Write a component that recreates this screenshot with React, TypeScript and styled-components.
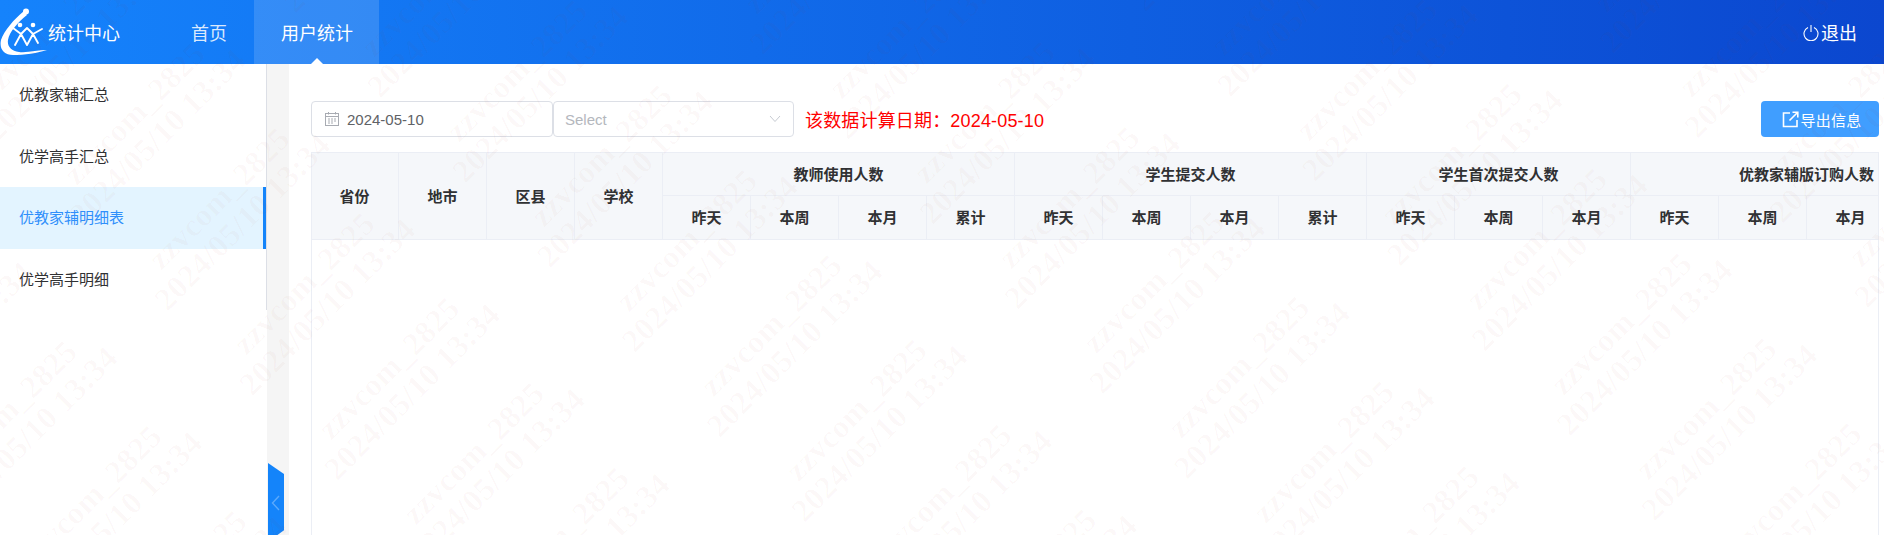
import React from "react";
import styled, { createGlobalStyle } from "styled-components";

const sans = `"Liberation Sans", "Noto Sans CJK SC", sans-serif`;

const Global = createGlobalStyle`
  html, body { margin: 0; padding: 0; height: 100%; background: #fff; overflow: hidden; }
  * { box-sizing: border-box; }
  body { font-family: ${sans}; }
`;

const Page = styled.div`
  position: relative;
  width: 1884px;
  height: 535px;
  overflow: hidden;
  display: flex;
  flex-direction: column;
`;

const Header = styled.header`
  flex: 0 0 64px;
  display: flex;
  align-items: stretch;
  color: #fff;
  background: linear-gradient(90deg, #1583fc 0%, #0b47cf 100%);
`;

const Brand = styled.div`
  flex: 0 0 164px;
  display: flex;
  align-items: center;
  font-size: 18px;
  svg { flex: none; margin-right: 1px; }
`;

const NavItem = styled.div<{ $active?: boolean }>`
  position: relative;
  display: flex;
  align-items: center;
  padding: 0 ${(p) => (p.$active ? 26 : 27)}px 0 27px;
  font-size: 18px;
  background: ${(p) => (p.$active ? "rgba(255,255,255,0.14)" : "transparent")};
  color: ${(p) => (p.$active ? "#fff" : "rgba(255,255,255,0.85)")};
  ${(p) =>
    p.$active
      ? `&::after {
          content: "";
          position: absolute;
          left: 50%;
          bottom: 0;
          margin-left: -6px;
          border: 6px solid transparent;
          border-top: 0;
          border-bottom-color: #fff;
        }`
      : ""}
`;

const Logout = styled.div`
  margin-left: auto;
  padding-right: 27px;
  display: flex;
  align-items: center;
  gap: 2px;
  font-size: 18px;
`;

const Body = styled.div`
  flex: 1;
  display: flex;
  min-height: 0;
`;

const Sidebar = styled.aside`
  flex: 0 0 267px;
`;

const Menu = styled.ul`
  margin: 0;
  padding: 0;
  list-style: none;
  border-right: 1px solid #dcdfe6;
`;

const MenuItem = styled.li<{ $active?: boolean }>`
  height: 61.5px;
  padding: 0 0 2px 19px;
  display: flex;
  align-items: center;
  font-size: 15px;
  color: ${(p) => (p.$active ? "#2f8ffb" : "#303133")};
  background: ${(p) => (p.$active ? "#e3f4ff" : "transparent")};
  border-right: 3px solid ${(p) => (p.$active ? "#1484fa" : "transparent")};
`;

const Gutter = styled.div`
  position: relative;
  flex: 0 0 22px;
  background: #f5f5f5;
`;

const Toggle = styled.div`
  position: absolute;
  left: 1px;
  bottom: -7px;
  width: 16px;
  height: 79px;
  display: flex;
  align-items: center;
  justify-content: center;
  background: #1484fa;
  clip-path: polygon(0 0, 100% 14%, 100% 85%, 0 100%);
`;

const Main = styled.main`
  flex: 1;
  min-width: 0;
  padding: 37px 5px 0 22px;
  display: flex;
  flex-direction: column;
`;

const Toolbar = styled.div`
  flex: 0 0 36px;
  display: flex;
  align-items: center;
`;

const DateField = styled.div`
  width: 242px;
  height: 36px;
  display: flex;
  align-items: center;
  gap: 8px;
  padding-left: 13px;
  border: 1px solid #dcdfe6;
  border-radius: 4px;
  font-size: 15px;
  color: #606266;
`;

const SelectField = styled.div`
  width: 241px;
  height: 36px;
  display: flex;
  align-items: center;
  justify-content: space-between;
  padding: 0 12px 0 11px;
  border: 1px solid #dcdfe6;
  border-radius: 4px;
  font-size: 15px;
  color: #b4b7bd;
`;

const Notice = styled.div`
  margin-left: 11px;
  font-size: 18px;
  letter-spacing: 0.17px;
  color: #f00;
`;

const ExportButton = styled.button`
  margin-left: auto;
  width: 118px;
  height: 36px;
  display: flex;
  align-items: center;
  justify-content: center;
  gap: 2px;
  padding: 0 0 0 3px;
  border: 0;
  border-radius: 4px;
  background: #409eff;
  color: #fff;
  font-family: ${sans};
  font-size: 15px;
  letter-spacing: 0.2px;
`;

const TableWrap = styled.div`
  flex: 1;
  min-height: 0;
  margin-top: 15px;
  overflow: hidden;
  border-left: 1px solid #ebeef5;
  border-right: 1px solid #ebeef5;
`;

const Table = styled.table`
  width: 1672px;
  margin-left: -1px;
  table-layout: fixed;
  border-collapse: separate;
  border-spacing: 0;
`;

const Cell = styled.th`
  height: 44px;
  padding: 0 0 2px;
  text-align: center;
  vertical-align: middle;
  font-size: 15px;
  font-weight: 700;
  color: #303133;
  background: #f5f7fa;
  border-top: 1px solid #ebeef5;
  border-right: 1px solid #ebeef5;
  border-bottom: 1px solid #ebeef5;
  tr + tr & { border-top: 0; }
`;

const Overlay = styled.div`
  position: absolute;
  inset: 0;
  overflow: hidden;
  pointer-events: none;
`;

const MarkGrid = styled.div`
  position: absolute;
  left: -1156px;
  top: -1388px;
  width: 4214px;
  height: 3360px;
  display: grid;
  grid-template-columns: repeat(14, 301px);
  grid-auto-rows: 120px;
  transform: rotate(-45deg);
`;

const Mark = styled.div`
  font-family: "Liberation Serif", serif;
  font-weight: 700;
  font-size: 32px;
  letter-spacing: 0.3px;
  line-height: 33px;
  text-align: center;
  white-space: nowrap;
  color: rgba(170, 60, 50, 0.03);
`;

const Logo = () => (
  <svg width="47" height="50" viewBox="0 0 47 50" aria-hidden="true">
    <path
      d="M24 4C14 12 4 24 1 33C-1 42 4 48 13 48C24 48 38 46 47 43C38 43 27 46 19 45C11 44 7 39 8 33C9 25 18 15 27 8Z"
      fill="#fff"
    />
    <circle cx="26" cy="4.5" r="3" fill="#fff" />
    <circle cx="20" cy="18" r="2.3" fill="#fff" />
    <circle cx="33" cy="18" r="2.3" fill="#fff" />
    <path
      d="M13 21L21 27L27 21L33 27L42 22M21 27L15 38M21 27L27 38M33 27L27 38M33 27L38 36"
      stroke="#fff"
      strokeWidth="1.9"
      strokeLinecap="round"
      strokeLinejoin="round"
      fill="none"
    />
  </svg>
);

const PowerIcon = () => (
  <svg width="16" height="17" viewBox="0 0 16 17" fill="none" stroke="#fff" strokeWidth="1.1" aria-hidden="true">
    <path d="M5 3.4A7 7 0 1 0 11 3.4" />
    <path d="M8 1V8" />
  </svg>
);

const CalendarIcon = () => (
  <svg width="14" height="14" viewBox="0 0 14 14" fill="none" stroke="#a8abb2" strokeWidth="1" aria-hidden="true">
    <rect x="0.5" y="1.5" width="13" height="12" />
    <path d="M0.5 4.5H13.5M3.5 0V2.5M10.5 0V2.5" />
    <path d="M3 7H5M6 7H8M9 7H11M3 9H5M6 9H8M9 9H11M3 11H5M6 11H8" />
  </svg>
);

const ChevronDown = () => (
  <svg width="12" height="8" viewBox="0 0 12 8" fill="none" stroke="#c0c4cc" strokeWidth="0.9" aria-hidden="true">
    <path d="M1 1L6 6.5L11 1" />
  </svg>
);

const ChevronLeft = () => (
  <svg width="10" height="16" viewBox="0 0 10 16" fill="none" stroke="rgba(255,255,255,0.3)" strokeWidth="1.4" aria-hidden="true">
    <path d="M8 1L1.5 8L8 15" />
  </svg>
);

const ExportIcon = () => (
  <svg width="17" height="17" viewBox="0 0 17 17" fill="none" stroke="#fff" strokeWidth="1.6" aria-hidden="true">
    <path d="M8 2H1.5V15.5H15V9" />
    <path d="M7.5 9.5L15 2M10.5 1.2H15.8V6.5" />
  </svg>
);

const menu = ["优教家辅汇总", "优学高手汇总", "优教家辅明细表", "优学高手明细"];
const fixedColumns = ["省份", "地市", "区县", "学校"];
const groups: { title: string; cols: string[] }[] = [
  { title: "教师使用人数", cols: ["昨天", "本周", "本月", "累计"] },
  { title: "学生提交人数", cols: ["昨天", "本周", "本月", "累计"] },
  { title: "学生首次提交人数", cols: ["昨天", "本周", "本月"] },
  { title: "优教家辅版订购人数", cols: ["昨天", "本周", "本月", "累计"] },
];

export default function App() {
  return (
    <Page>
      <Global />
      <Header>
        <Brand>
          <Logo />
          统计中心
        </Brand>
        <NavItem>首页</NavItem>
        <NavItem $active>用户统计</NavItem>
        <Logout>
          <PowerIcon />
          退出
        </Logout>
      </Header>
      <Body>
        <Sidebar>
          <Menu>
            {menu.map((m, i) => (
              <MenuItem key={m} $active={i === 2}>
                {m}
              </MenuItem>
            ))}
          </Menu>
        </Sidebar>
        <Gutter>
          <Toggle>
            <ChevronLeft />
          </Toggle>
        </Gutter>
        <Main>
          <Toolbar>
            <DateField>
              <CalendarIcon />
              2024-05-10
            </DateField>
            <SelectField>
              Select
              <ChevronDown />
            </SelectField>
            <Notice>该数据计算日期：2024-05-10</Notice>
            <ExportButton>
              <ExportIcon />
              导出信息
            </ExportButton>
          </Toolbar>
          <TableWrap>
            <Table>
              <colgroup>
                {Array.from({ length: 19 }, (_, i) => (
                  <col key={i} width={88} />
                ))}
              </colgroup>
              <thead>
                <tr>
                  {fixedColumns.map((c) => (
                    <Cell key={c} rowSpan={2}>
                      {c}
                    </Cell>
                  ))}
                  {groups.map((g) => (
                    <Cell key={g.title} colSpan={g.cols.length}>
                      {g.title}
                    </Cell>
                  ))}
                </tr>
                <tr>
                  {groups.flatMap((g) =>
                    g.cols.map((c) => <Cell key={g.title + c}>{c}</Cell>)
                  )}
                </tr>
              </thead>
            </Table>
          </TableWrap>
        </Main>
      </Body>
      <Overlay>
        <MarkGrid>
          {Array.from({ length: 14 * 28 }, (_, i) => (
            <Mark key={i}>
              zzvcom_2825
              <br />
              2024/05/10 13:34
            </Mark>
          ))}
        </MarkGrid>
      </Overlay>
    </Page>
  );
}
